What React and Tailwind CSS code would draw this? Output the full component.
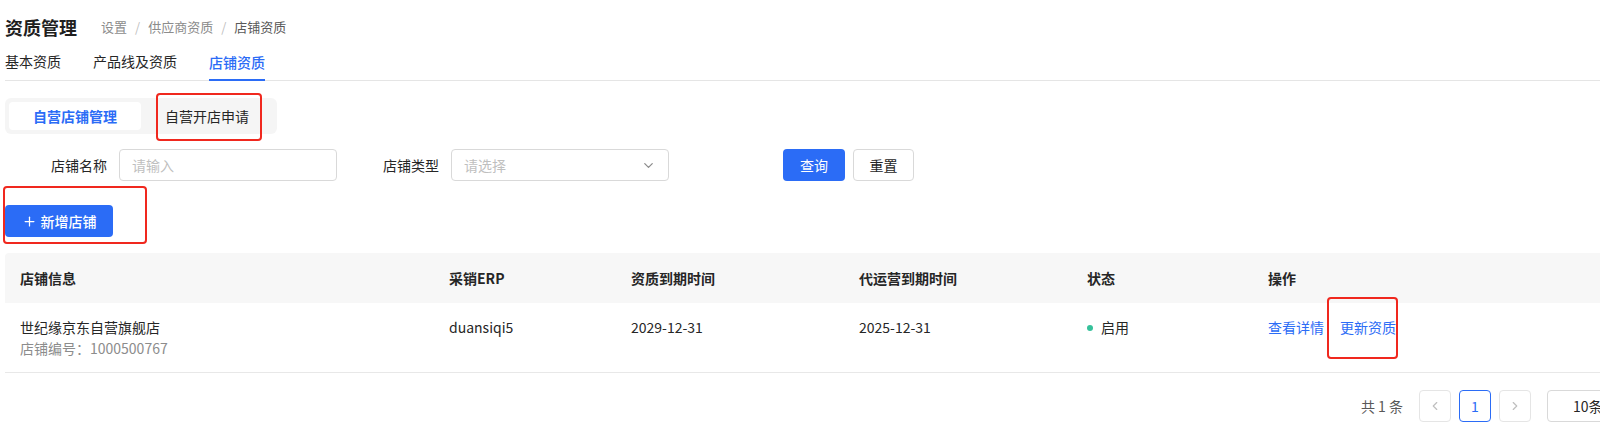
import React from 'react';
import { ChevronDown, ChevronLeft, ChevronRight, Plus } from 'lucide-react';

const columns = [
    { key: 'info', title: '店铺信息', width: 'w-[429px]' },
    { key: 'erp', title: '采销ERP', width: 'w-[182px]' },
    { key: 'qual', title: '资质到期时间', width: 'w-[228px]' },
    { key: 'agent', title: '代运营到期时间', width: 'w-[228px]' },
    { key: 'status', title: '状态', width: 'w-[181px]' },
    { key: 'ops', title: '操作', width: 'flex-1' },
];

const FormItem = ({ label, children }) => (
    <div className="flex items-center gap-3">
        <span className="w-[102px] text-right text-sm text-[#262626]">{label}</span>
        <div className="w-[218px]">{children}</div>
    </div>
);

const App = () => {
    return (
        <div className="w-full h-[445px] overflow-hidden bg-white" style={{ fontFamily: '"Noto Sans CJK SC", "Noto Sans", sans-serif' }}>
            <div className="w-[1660px] pl-[5px]">
                {/* Header */}
                <div className="flex items-center h-[26px] mt-[14px]">
                    <h1 className="text-[18px] font-bold text-[#1f1f1f] leading-[26px]">资质管理</h1>
                    <div className="ml-6 flex items-center gap-2 text-[13px] text-[#8c8c8c]">
                        <span>设置</span>
                        <span className="text-[#bfbfbf]">/</span>
                        <span>供应商资质</span>
                        <span className="text-[#bfbfbf]">/</span>
                        <span className="text-[#595959]">店铺资质</span>
                    </div>
                </div>

                {/* Tabs */}
                <div className="mt-[11px] flex items-end gap-8 border-b border-[#e5e5e5] h-[30px]">
                    <div className="h-full text-sm text-[#262626] leading-[20px]">基本资质</div>
                    <div className="h-full text-sm text-[#262626] leading-[20px]">产品线及资质</div>
                    <div className="h-full text-sm text-[#2b6cf6] leading-[20px] font-medium border-b-2 border-[#2b6cf6] -mb-px">店铺资质</div>
                </div>

                {/* Segmented */}
                <div className="relative mt-[17px] inline-flex p-1 bg-[#f5f5f5] rounded-md">
                    <div className="w-[132px] h-[28px] flex items-center justify-center bg-white rounded text-sm font-semibold text-[#2b6cf6]">自营店铺管理</div>
                    <div className="w-[132px] h-[28px] flex items-center justify-center text-sm text-[#262626]">自营开店申请</div>
                    <div className="absolute left-[151px] top-[-5px] w-[106px] h-[48px] border-2 border-[#f0281e] rounded"></div>
                </div>

                {/* Filters */}
                <div className="mt-[15px] flex items-center -ml-[5px] pl-[5px]">
                    <FormItem label="店铺名称">
                        <div className="h-8 border border-[#d9d9d9] rounded px-3 flex items-center text-sm text-[#bfbfbf]">请输入</div>
                    </FormItem>
                    <FormItem label="店铺类型">
                        <div className="h-8 border border-[#d9d9d9] rounded px-3 flex items-center justify-between text-sm text-[#bfbfbf]">
                            <span>请选择</span>
                            <ChevronDown size={15} className="text-[#8c8c8c]" />
                        </div>
                    </FormItem>
                    <div className="ml-[114px] flex items-center gap-2">
                        <button className="w-[62px] h-8 rounded bg-[#2b6cf6] text-white text-sm">查询</button>
                        <button className="w-[61px] h-8 rounded border border-[#d9d9d9] bg-white text-[#262626] text-sm">重置</button>
                    </div>
                </div>

                {/* Add button */}
                <div className="relative mt-6 w-fit">
                    <button className="w-[108px] h-8 rounded bg-[#2b6cf6] text-white text-sm font-medium flex items-center justify-center gap-1">
                        <Plus size={15} strokeWidth={2} />
                        新增店铺
                    </button>
                    <div className="absolute left-[-2px] top-[-19px] w-[144px] h-[58px] border-2 border-[#f0281e] rounded"></div>
                </div>

                {/* Table */}
                <div className="mt-4">
                    <div className="flex h-[50px] items-center bg-[#f7f7f7] rounded-t">
                        {columns.map((c) => (
                            <div key={c.key} className={`${c.width} px-[15px] text-sm font-semibold text-[#262626]`}>{c.title}</div>
                        ))}
                    </div>
                    <div className="flex h-[70px] pt-[14px] border-b border-[#e8e8e8] text-sm text-[#262626] leading-[21px]">
                        <div className="w-[429px] px-[15px]">
                            <div>世纪缘京东自营旗舰店</div>
                            <div className="text-[#8c8c8c]">店铺编号：1000500767</div>
                        </div>
                        <div className="w-[182px] px-[15px]">duansiqi5</div>
                        <div className="w-[228px] px-[15px]">2029-12-31</div>
                        <div className="w-[228px] px-[15px]">2025-12-31</div>
                        <div className="w-[181px] px-[15px] flex items-start">
                            <span className="flex items-center h-[21px]">
                                <span className="w-1.5 h-1.5 rounded-full bg-[#36c19a] mr-2"></span>
                                启用
                            </span>
                        </div>
                        <div className="flex-1 px-[15px] flex items-start gap-4 text-[#2b6cf6]">
                            <span>查看详情</span>
                            <span className="relative">
                                更新资质
                                <span className="absolute left-[-13px] top-[-20px] w-[71px] h-[62px] border-2 border-[#f0281e] rounded"></span>
                            </span>
                        </div>
                    </div>
                </div>

                {/* Pagination */}
                <div className="mt-[17px] flex items-center justify-end pr-[13px] text-sm text-[#595959]">
                    <span className="mr-4">共 1 条</span>
                    <div className="flex items-center gap-2">
                        <div className="w-8 h-8 border border-[#e5e5e5] rounded flex items-center justify-center text-[#bfbfbf]">
                            <ChevronLeft size={14} />
                        </div>
                        <div className="w-8 h-8 border border-[#2b6cf6] rounded flex items-center justify-center text-[#2b6cf6]">1</div>
                        <div className="w-8 h-8 border border-[#e5e5e5] rounded flex items-center justify-center text-[#bfbfbf]">
                            <ChevronRight size={14} />
                        </div>
                    </div>
                    <div className="ml-4 w-[100px] h-8 border border-[#d9d9d9] rounded pl-[25px] flex items-center text-[#262626]">10条/页</div>
                </div>
            </div>
        </div>
    );
};

export default App;
